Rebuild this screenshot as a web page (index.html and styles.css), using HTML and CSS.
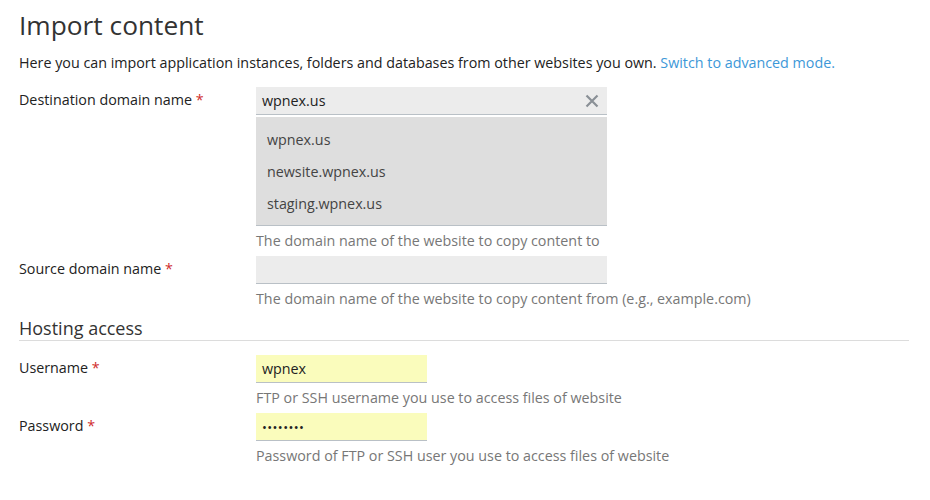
FILE: index.html
```html
<!DOCTYPE html>
<html lang="en">
<head>
  <meta charset="UTF-8" />
  <title>Import content</title>
  <link rel="stylesheet" href="styles.css">
</head>
<body>

<div class="page">
  <h1 class="title">Import content</h1>
  <p class="intro">Here you can import application instances, folders and databases from other websites you own. <a href="#" class="link">Switch to advanced mode.</a></p>

  <div class="form-row">
    <label class="label">Destination domain name <span class="req">*</span></label>
    <div class="field">
      <div class="select">
        <div class="input">
          <span>wpnex.us</span>
          <svg class="clear" width="14" height="14" viewBox="0 0 14 14"><path d="M1.5 1.5 L12.5 12.5 M12.5 1.5 L1.5 12.5" stroke="#8a9096" stroke-width="2.2"/></svg>
        </div>
        <ul class="options">
          <li>wpnex.us</li>
          <li>newsite.wpnex.us</li>
          <li>staging.wpnex.us</li>
        </ul>
      </div>
      <div class="hint">The domain name of the website to copy content to</div>
    </div>
  </div>

  <div class="form-row">
    <label class="label">Source domain name <span class="req">*</span></label>
    <div class="field">
      <div class="input"></div>
      <div class="hint">The domain name of the website to copy content from (e.g., example.com)</div>
    </div>
  </div>

  <h2 class="section">Hosting access</h2>

  <div class="form-row">
    <label class="label">Username <span class="req">*</span></label>
    <div class="field">
      <div class="input short filled">wpnex</div>
      <div class="hint">FTP or SSH username you use to access files of website</div>
    </div>
  </div>

  <div class="form-row">
    <label class="label">Password <span class="req">*</span></label>
    <div class="field">
      <div class="input short filled dots">&bull;&bull;&bull;&bull;&bull;&bull;&bull;&bull;</div>
      <div class="hint">Password of FTP or SSH user you use to access files of website</div>
    </div>
  </div>
</div>

</body>
</html>
```

FILE: styles.css
```css
body {
  margin: 0;
  padding: 0;
  background: white;
  font-family: "Open Sans", Arial, sans-serif;
  font-size: 14.3px;
  color: #222;
}

.page {
  padding: 7px 21px 0 19px;
}

.title {
  font-size: 26.3px;
  font-weight: 400;
  color: #333;
  margin: 0 0 10px;
  line-height: 36px;
}

.intro {
  margin: 0 0 14px;
  line-height: 20px;
}

.link {
  color: #3d98d8;
  text-decoration: none;
}

.form-row {
  display: flex;
  align-items: flex-start;
}

.label {
  width: 237px;
  flex: none;
  line-height: 26px;
}

.req {
  color: #d02c2c;
}

.field {
  flex: 1;
}

.select,
.input {
  width: 351px;
}

.input {
  box-sizing: border-box;
  height: 28px;
  background: #ececec;
  border-bottom: 1px solid #b9c0c6;
  padding: 0 8px 0 6px;
  display: flex;
  align-items: center;
  justify-content: space-between;
}

.input.short {
  width: 171px;
}

.input.filled {
  background: #fafcbc;
}

.input.dots {
  font-size: 13px;
  letter-spacing: 0.4px;
}

.clear {
  display: block;
}

.options {
  list-style: none;
  margin: 2px 0 0;
  padding: 7px 0 5px;
  background: #dedede;
  border-bottom: 1px solid #b9c0c6;
}

.options li {
  padding: 0 11px;
  line-height: 32px;
  color: #444;
}

.hint {
  color: #777;
  line-height: 20px;
  padding: 5px 0 5px;
  white-space: nowrap;
}

.section {
  font-size: 18px;
  font-weight: 400;
  color: #333;
  margin: 2px 0 14px;
  line-height: 24px;
  border-bottom: 1px solid #dcdcdc;
}
```
